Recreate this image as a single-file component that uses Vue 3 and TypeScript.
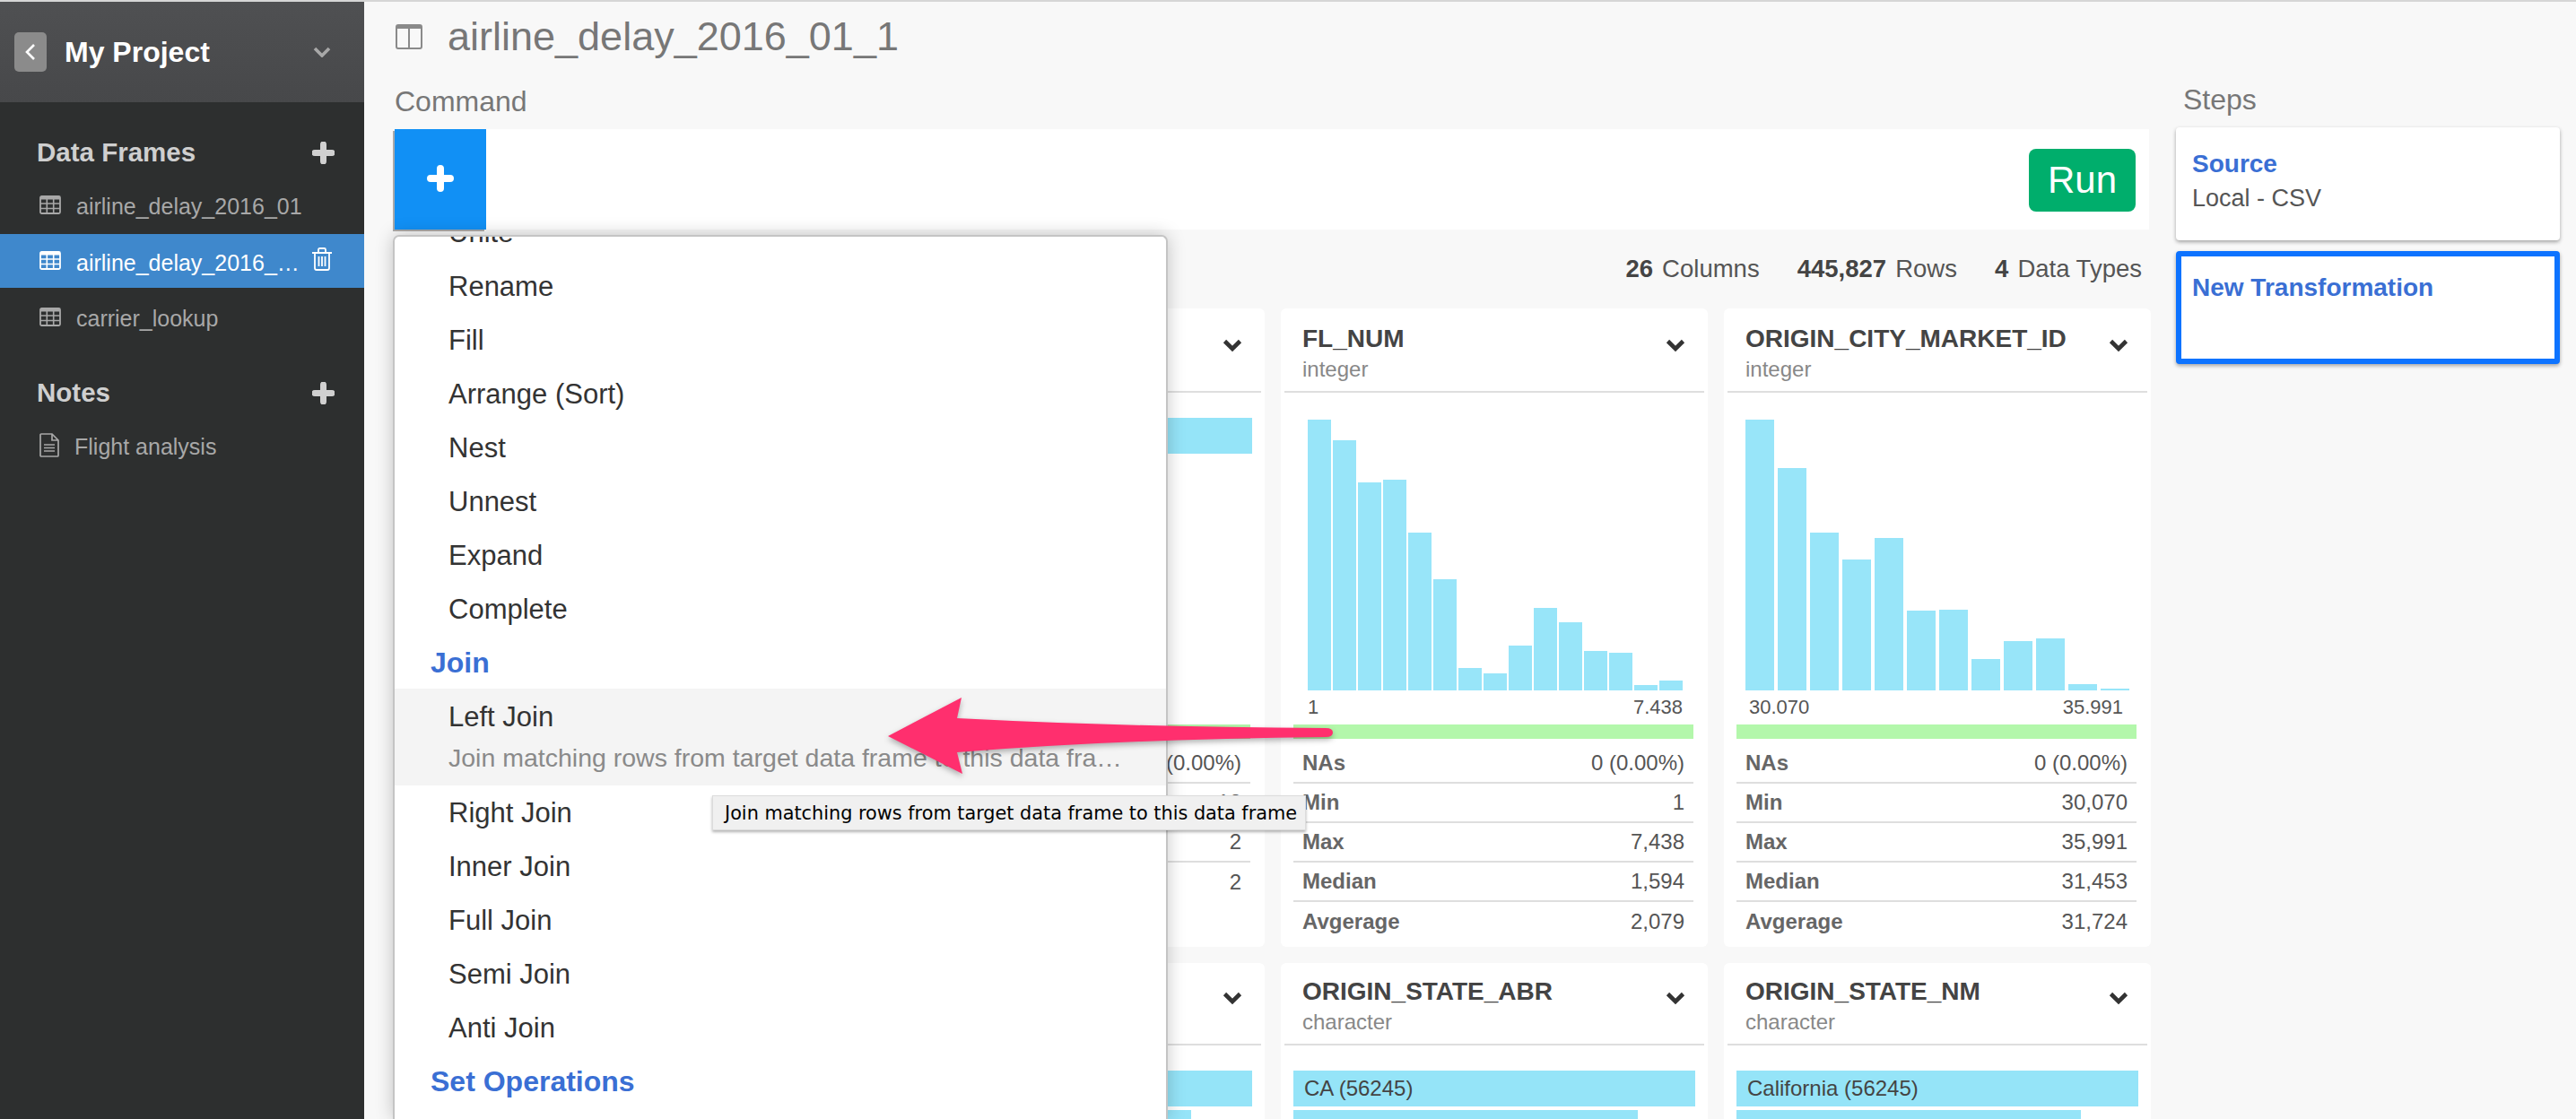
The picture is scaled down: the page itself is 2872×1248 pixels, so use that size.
<script setup lang="ts">
interface Stat { label: string; value: string }
interface Card {
  title: string
  type: string
  kind: 'narrow' | 'wide' | 'cat'
  second?: boolean
  tops?: number[]
  min?: string
  max?: string
  bars?: { text: string; width: number }[]
  stats?: Stat[]
}

const frames = [
  { name: 'airline_delay_2016_01', active: false },
  { name: 'airline_delay_2016_01_1', active: true },
  { name: 'carrier_lookup', active: false },
]

const menuBefore = ['Unite', 'Rename', 'Fill', 'Arrange (Sort)', 'Nest', 'Unnest', 'Expand', 'Complete']
const menuAfter = ['Right Join', 'Inner Join', 'Full Join', 'Semi Join', 'Anti Join']

const numStats = (a: string, b: string, c: string, d: string): Stat[] => [
  { label: 'NAs', value: '0 (0.00%)' },
  { label: 'Min', value: a },
  { label: 'Max', value: b },
  { label: 'Median', value: c },
  { label: 'Avgerage', value: d },
]

const cards: Card[] = [
  { title: 'ORIGIN', type: 'integer', kind: 'cat', bars: [] },
  {
    title: '', type: '', kind: 'cat',
    bars: [{ text: '', width: 448 }],
    stats: [
      { label: '', value: '0 (0.00%)' },
      { label: '', value: '12' },
      { label: '', value: '2' },
      { label: '', value: '2' },
    ],
  },
  {
    title: 'FL_NUM', type: 'integer', kind: 'narrow',
    tops: [144, 213, 355, 344, 523, 678, 975, 994, 900, 775, 823, 918, 924, 1032, 1016],
    min: '1', max: '7.438',
    stats: numStats('1', '7,438', '1,594', '2,079'),
  },
  {
    title: 'ORIGIN_CITY_MARKET_ID', type: 'integer', kind: 'wide',
    tops: [144, 306, 523, 612, 540, 784, 780, 945, 886, 876, 1030, 1044],
    min: '30.070', max: '35.991',
    stats: numStats('30,070', '35,991', '31,453', '31,724'),
  },
  { title: '', type: '', kind: 'cat', second: true, bars: [] },
  {
    title: '', type: '', kind: 'cat', second: true,
    bars: [{ text: '', width: 448 }, { text: '', width: 380 }],
  },
  {
    title: 'ORIGIN_STATE_ABR', type: 'character', kind: 'cat', second: true,
    bars: [{ text: 'CA (56245)', width: 448 }, { text: '', width: 384 }],
  },
  {
    title: 'ORIGIN_STATE_NM', type: 'character', kind: 'cat', second: true,
    bars: [{ text: 'California (56245)', width: 448 }, { text: '', width: 384 }],
  },
]

const barHeight = (top: number): number => (1050 - top) / 3
</script>

<template>
  <div class="page">
    <div class="stripe"></div>
    <div class="shell">
      <aside class="side">
        <div class="project">
          <span class="back">
            <svg width="14" height="20" viewBox="0 0 14 20"><path d="M11 2 3 10l8 8" fill="none" stroke="#fff" stroke-width="2.6" /></svg>
          </span>
          <span class="project-name">My Project</span>
          <svg class="project-caret" width="20" height="12" viewBox="0 0 20 12"><path d="M2 2l8 8 8-8" fill="none" stroke="#a8a8a8" stroke-width="3.6" /></svg>
        </div>

        <div class="side-head first">
          <span>Data Frames</span>
          <svg width="25" height="25" viewBox="0 0 25 25"><path d="M12.5 3v19M3 12.5h19" stroke="#d0d0d0" stroke-width="7" stroke-linecap="round" /></svg>
        </div>
        <div v-for="f in frames" :key="f.name" class="side-row" :class="{ active: f.active }">
          <svg class="grid-icon" width="24" height="21" viewBox="0 0 24 21" fill="none" stroke="currentColor">
            <rect x="1" y="1" width="22" height="19" rx="1.5" stroke-width="1.8" />
            <path d="M1 3h22" stroke-width="3" />
            <path d="M1 9h22M1 14.500h22M8.300 4v16M15.700 4v16" stroke-width="1.6" />
          </svg>
          <span class="side-name">{{ f.name }}</span>
          <svg v-if="f.active" class="trash" width="22" height="26" viewBox="0 0 22 26" fill="none" stroke="#fff" stroke-width="1.8">
            <path d="M0 6h22M7 6V2.500Q7 1 8.500 1h5Q15 1 15 2.500V6" />
            <path d="M3 6v17q0 2 2 2h12q2 0 2-2V6M7.500 10v11M11 10v11M14.500 10v11" />
          </svg>
        </div>

        <div class="side-head notes">
          <span>Notes</span>
          <svg width="25" height="25" viewBox="0 0 25 25"><path d="M12.5 3v19M3 12.5h19" stroke="#d0d0d0" stroke-width="7" stroke-linecap="round" /></svg>
        </div>
        <div class="side-row">
          <svg class="doc-icon" width="22" height="27" viewBox="0 0 22 27" fill="none" stroke="currentColor" stroke-width="1.7">
            <path d="M1 2q0-1 1-1h12l7 7v17q0 1-1 1H2q-1 0-1-1zM14 1v7h7" />
            <path d="M5 13h12M5 16.500h12M5 20h12" />
          </svg>
          <span class="side-name">Flight analysis</span>
        </div>
      </aside>

      <main class="main">
        <header class="title">
          <svg width="30" height="28" viewBox="0 0 30 28" fill="none" stroke="#8a8a8a">
            <rect x="1" y="1" width="28" height="26" rx="2" stroke-width="2" />
            <path d="M1 3h28" stroke-width="4" />
            <path d="M15 3v24" stroke-width="2" />
          </svg>
          <h1>airline_delay_2016_01_1</h1>
        </header>

        <div class="body">
          <section class="center">
            <div class="label">Command</div>
            <div class="command">
              <button class="add">
                <svg width="30" height="30" viewBox="0 0 30 30"><path d="M15 4v22M4 15h22" stroke="#fff" stroke-width="8" stroke-linecap="round" /></svg>
              </button>
              <button class="run">Run</button>
            </div>
            <div class="summary">
              <span><b>26</b> Columns</span>
              <span><b>445,827</b> Rows</span>
              <span><b>4</b> Data Types</span>
            </div>
            <div class="grid">
              <article v-for="(c, i) in cards" :key="i" class="card" :class="{ second: c.second }">
                <div class="card-head">
                  <div>
                    <div class="card-title">{{ c.title }}</div>
                    <div class="card-type">{{ c.type }}</div>
                  </div>
                  <svg class="caret" width="22" height="14" viewBox="0 0 22 14"><path d="M2.500 2.500 11 11l8.500-8.500" fill="none" stroke="#333" stroke-width="4.600" /></svg>
                </div>

                <template v-if="c.kind !== 'cat'">
                  <div class="chart" :class="c.kind">
                    <div class="plot">
                      <div v-for="(t, n) in c.tops" :key="n" class="bin" :style="{ height: barHeight(t) + 'px' }"></div>
                    </div>
                    <div class="axis"><span>{{ c.min }}</span><span>{{ c.max }}</span></div>
                  </div>
                </template>
                <div v-else class="cats" :class="{ tall: c.stats }">
                  <div v-for="(b, n) in c.bars" :key="n" class="cat" :style="{ width: b.width + 'px' }">{{ b.text }}</div>
                </div>

                <template v-if="c.stats">
                  <div class="valid"></div>
                  <div class="stats">
                    <div v-for="(s, n) in c.stats" :key="n" class="stat">
                      <b>{{ s.label }}</b><span>{{ s.value }}</span>
                    </div>
                  </div>
                </template>
              </article>
            </div>
          </section>

          <aside class="steps">
            <div class="label steps-label">Steps</div>
            <div class="step">
              <div class="step-title">Source</div>
              <div class="step-sub">Local - CSV</div>
            </div>
            <div class="step current">
              <div class="step-title">New Transformation</div>
            </div>
          </aside>
        </div>
      </main>
    </div>

    <div class="menu">
      <ul class="menu-list">
        <li v-for="m in menuBefore" :key="m" class="item">{{ m }}</li>
        <li class="group">Join</li>
        <li class="item hovered">
          <div>Left Join</div>
          <div class="hint">Join matching rows from target data frame to this data frame</div>
        </li>
        <li v-for="m in menuAfter" :key="m" class="item">{{ m }}</li>
        <li class="group">Set Operations</li>
      </ul>
    </div>

    <div class="tooltip">Join matching rows from target data frame to this data frame</div>

    <svg class="arrow" width="520" height="110" viewBox="980 770 520 110">
      <path d="M990 821 1072 778 1067 801Q1260 811 1478 812Q1486 812 1486 817Q1486 822 1478 822Q1260 824 1067 839L1073 863Z" fill="#ff2f6e" />
    </svg>
  </div>
</template>

<style scoped>
.page {
  position: relative;
  width: 2872px;
  height: 1248px;
  overflow: hidden;
  background: #f8f8f8;
  font-family: "Liberation Sans", Arial, sans-serif;
  color: #555;
}
.stripe { height: 2px; background: #d6d6d6; }
.shell { display: flex; height: 1246px; }

.side { width: 406px; flex: none; background: #2d2f2f; color: #a8a8a8; }
.project {
  height: 112px;
  display: flex;
  align-items: center;
  padding: 0 37px 0 16px;
  background: linear-gradient(#4f5052, #47484a);
}
.back {
  width: 36px;
  height: 44px;
  border-radius: 5px;
  background: #8b8b8b;
  display: flex;
  align-items: center;
  justify-content: center;
}
.project-name { margin-left: 20px; flex: 1; color: #fff; font-size: 32px; font-weight: 700; }

.side-head {
  height: 48px;
  margin-bottom: 4px;
  display: flex;
  align-items: center;
  justify-content: space-between;
  padding: 0 33px 0 41px;
  color: #cfcfcf;
  font-size: 29.500px;
  font-weight: 700;
}
.side-head.first { margin-top: 32px; }
.side-head.notes { margin-top: 31px; }
.side-row {
  height: 60px;
  margin-bottom: 2.500px;
  display: flex;
  align-items: center;
  padding: 5px 36px 0 43px;
  box-sizing: border-box;
  font-size: 25px;
}
.side-row.active { background: #3f88cc; color: #fff; }
.grid-icon { flex: none; margin: -5px 17px 0 1px; }
.doc-icon { flex: none; margin: -5px 17px 0 1px; }
.side-name { flex: 1; min-width: 0; white-space: nowrap; overflow: hidden; text-overflow: ellipsis; }
.trash { flex: none; margin: -9px 0 0 12px; }

.main { flex: 1; min-width: 0; padding-left: 34px; }
.title { height: 78px; display: flex; align-items: center; gap: 28px; }
.title svg { margin-left: 1px; }
.title h1 { margin: 0; font-size: 45px; font-weight: 400; color: #777; }
.body { display: flex; }
.center { width: 1958px; flex: none; }
.label { height: 64px; line-height: 66px; font-size: 32px; color: #777; }

.command {
  height: 112px;
  margin-right: 2px;
  background: #fff;
  display: flex;
  align-items: center;
  justify-content: space-between;
  padding-right: 15px;
}
.add {
  width: 102px;
  height: 112px;
  border: 0;
  padding: 0;
  background: #1190f5;
  box-shadow: -2px 2px 0 #a9a9a9;
}
.add svg { display: block; margin: 0 auto; position: relative; top: -1px; }
.run {
  width: 119px;
  height: 70px;
  margin-top: 2px;
  border: 0;
  border-radius: 8px;
  background: #00ae6c;
  color: #fff;
  font: 42px "Liberation Sans", Arial, sans-serif;
}
.summary {
  height: 88px;
  display: flex;
  align-items: center;
  justify-content: flex-end;
  gap: 42px;
  padding: 0 10px 0 0;
  font-size: 27.500px;
  color: #555;
}
.summary b { color: #444; margin-right: 2.500px; }

.grid { display: grid; grid-template-columns: repeat(4, 476px); gap: 18px; }
.card { height: 712px; background: #fff; border-radius: 6px; overflow: hidden; }
.card-head {
  height: 92px;
  margin: 0 4px;
  box-sizing: content-box;
  padding: 0;
  border-bottom: 2px solid #dedede;
  display: flex;
  justify-content: space-between;
  align-items: flex-start;
}
.card-head > div { padding: 17px 0 0 20px; }
.card-title { height: 34px; line-height: 34px; font-size: 28px; font-weight: 700; color: #444; white-space: nowrap; }
.card-type { height: 34px; line-height: 34px; font-size: 24px; color: #888; }
.caret { margin: 34px 21px 0 0; flex: none; }
.second .card-head { height: 90px; }
.second .card-head > div { padding-top: 15px; }
.second .caret { margin-top: 32px; }

.chart { padding-top: 30px; }
.chart.narrow { margin: 0 28px 0 30px; }
.chart.wide { margin: 0 24px; }
.plot { height: 302px; display: flex; align-items: flex-end; gap: 2px; }
.wide .plot { gap: 4px; }
.bin { flex: 1; background: #98e5f9; }
.axis {
  height: 38px;
  display: flex;
  align-items: center;
  justify-content: space-between;
  font-size: 22px;
  color: #555;
}
.wide .axis { padding: 0 7px 0 4px; }
.valid { height: 16px; margin: 0 16px 0 14px; background: #b3f7ab; }
.stats { margin: 6px 16px 0 14px; }
.stat {
  height: 44px;
  box-sizing: border-box;
  display: flex;
  justify-content: space-between;
  align-items: center;
  padding: 0 10px 0 10px;
  border-bottom: 2px solid #dedede;
  font-size: 24px;
}
.stat:last-child { border-bottom: 0; }
.stat b { color: #666; }

.cats { padding: 28px 0 0 14px; }
.second .cats { padding-top: 28px; }
.cats.tall { height: 370px; box-sizing: border-box; }
.cat {
  height: 40px;
  line-height: 40px;
  margin-bottom: 4px;
  padding-left: 12px;
  box-sizing: border-box;
  background: #95e4f8;
  color: #444;
  font-size: 24px;
  white-space: nowrap;
}

.steps { width: 428px; margin-left: 28px; flex: none; }
.steps-label { height: 62px; line-height: 62px; padding-left: 8px; }
.step {
  height: 126px;
  box-sizing: border-box;
  margin-bottom: 12px;
  padding: 24px 18px;
  background: #fff;
  border-radius: 4px;
  box-shadow: 0 2px 4px rgba(0, 0, 0, 0.35);
}
.step.current { border: 6px solid #0d73ff; padding: 18px 12px; }
.step-title { height: 34px; line-height: 34px; font-size: 28px; font-weight: 700; color: #3a6fd4; }
.step-sub { height: 38px; line-height: 42px; font-size: 27px; color: #555; }

.menu {
  position: absolute;
  left: 438px;
  top: 262px;
  width: 864px;
  height: 986px;
  box-sizing: border-box;
  overflow: hidden;
  background: #fff;
  border: 2px solid #c4c4c4;
  border-bottom: 0;
  border-radius: 7px 7px 0 0;
  box-shadow: 0 0 20px rgba(0, 0, 0, 0.22);
}
.menu-list { list-style: none; margin: -34px 0 0; padding: 0; }
.item {
  height: 60px;
  line-height: 60px;
  padding-left: 60px;
  font-size: 31px;
  color: #333;
}
.group {
  height: 58px;
  line-height: 59px;
  padding-left: 40px;
  font-size: 32px;
  font-weight: 700;
  color: #3a6fd4;
}
.item.hovered {
  height: 108px;
  margin-bottom: 1px;
  background: #f4f4f4;
  line-height: normal;
  padding-top: 14px;
  box-sizing: border-box;
}
.hint {
  width: 752px;
  margin-top: 11px;
  font-size: 28.500px;
  color: #8a8a8a;
  white-space: nowrap;
  overflow: hidden;
  text-overflow: ellipsis;
}
.tooltip {
  position: absolute;
  left: 794px;
  top: 887px;
  width: 662px;
  height: 39px;
  line-height: 38px;
  box-sizing: border-box;
  padding-left: 13px;
  background: #f0f0f0;
  border: 1px solid #dcdcdc;
  box-shadow: 0 2px 3px rgba(0, 0, 0, 0.3);
  font-family: "DejaVu Sans", sans-serif;
  font-size: 20.800px;
  color: #000;
  white-space: nowrap;
}
.arrow {
  position: absolute;
  left: 980px;
  top: 770px;
  filter: drop-shadow(0 3px 3px rgba(0, 0, 0, 0.3));
}
</style>

<style>
html, body { margin: 0; background: #f8f8f8; }
</style>
